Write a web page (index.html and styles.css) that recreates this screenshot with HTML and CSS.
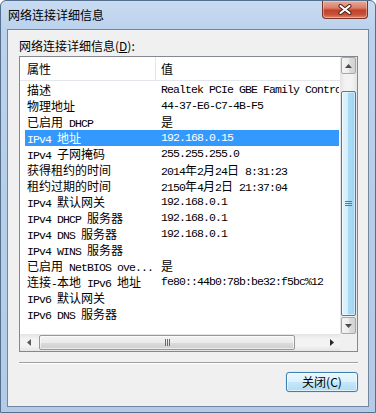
FILE: index.html
```html
<!DOCTYPE html>
<html>
<head>
<meta charset="utf-8">
<link rel="stylesheet" href="styles.css">
</head>
<body>
<div class="window">
  <div class="titlebar">
    <span class="title">网络连接详细信息</span>
    <button class="close" aria-label="关闭">
      <svg width="14" height="11" viewBox="0 0 14 11">
        <path d="M2.5 2 L11.5 9 M11.5 2 L2.5 9" stroke="#4a1a12" stroke-width="4" stroke-linecap="round"/>
        <path d="M2.5 2 L11.5 9 M11.5 2 L2.5 9" stroke="#ffffff" stroke-width="2.2" stroke-linecap="round"/>
      </svg>
    </button>
  </div>
  <div class="client">
    <div class="label">网络连接详细信息(<u>D</u>):</div>
    <div class="listbox">
      <div class="view">
        <div class="header">
          <div class="hc1">属性</div>
          <div class="hc2">值</div>
        </div>
        <div class="rows">
          <div class="row"><span class="k"><span class="c">描述</span></span><span class="v">Realtek PCIe GBE Family Controller</span></div>
          <div class="row"><span class="k"><span class="c">物理地址</span></span><span class="v">44-37-E6-C7-4B-F5</span></div>
          <div class="row"><span class="k"><span class="c">已启用</span> DHCP</span><span class="v"><span class="c">是</span></span></div>
          <div class="row sel"><span class="k">IPv4 <span class="c">地址</span></span><span class="v">192.168.0.15</span></div>
          <div class="row"><span class="k">IPv4 <span class="c">子网掩码</span></span><span class="v">255.255.255.0</span></div>
          <div class="row"><span class="k"><span class="c">获得租约的时间</span></span><span class="v">2014<span class="c">年</span>2<span class="c">月</span>24<span class="c">日</span> 8:31:23</span></div>
          <div class="row"><span class="k"><span class="c">租约过期的时间</span></span><span class="v">2150<span class="c">年</span>4<span class="c">月</span>2<span class="c">日</span> 21:37:04</span></div>
          <div class="row"><span class="k">IPv4 <span class="c">默认网关</span></span><span class="v">192.168.0.1</span></div>
          <div class="row"><span class="k">IPv4 DHCP <span class="c">服务器</span></span><span class="v">192.168.0.1</span></div>
          <div class="row"><span class="k">IPv4 DNS <span class="c">服务器</span></span><span class="v">192.168.0.1</span></div>
          <div class="row"><span class="k">IPv4 WINS <span class="c">服务器</span></span><span class="v"></span></div>
          <div class="row"><span class="k"><span class="c">已启用</span> NetBIOS ove...</span><span class="v"><span class="c">是</span></span></div>
          <div class="row"><span class="k"><span class="c">连接</span>-<span class="c">本地</span> IPv6 <span class="c">地址</span></span><span class="v">fe80::44b0:78b:be32:f5bc%12</span></div>
          <div class="row"><span class="k">IPv6 <span class="c">默认网关</span></span><span class="v"></span></div>
          <div class="row"><span class="k">IPv6 DNS <span class="c">服务器</span></span><span class="v"></span></div>
        </div>
      </div>
      <div class="vscroll">
        <div class="vbtn">
          <svg width="7" height="4" viewBox="0 0 7 4"><path d="M0 4 L3.5 0 L7 4 Z" fill="#4d4d4d"/></svg>
        </div>
        <div class="vgap-top"></div>
        <div class="vthumb">
          <svg width="7" height="7" viewBox="0 0 7 7">
            <path d="M0 1.5 H7 M0 3.5 H7 M0 5.5 H7" stroke="#3c7fb1" stroke-width="1"/>
          </svg>
        </div>
        <div class="vgap-bottom"></div>
        <div class="vbtn">
          <svg width="7" height="4" viewBox="0 0 7 4"><path d="M0 0 L7 0 L3.5 4 Z" fill="#4d4d4d"/></svg>
        </div>
      </div>
      <div class="hscroll">
        <div class="harrow">
          <svg width="4" height="7" viewBox="0 0 4 7"><path d="M4 0 L4 7 L0 3.5 Z" fill="#5a5a5a"/></svg>
        </div>
        <div class="hgap"></div>
        <div class="hthumb">
          <svg width="7" height="7" viewBox="0 0 7 7">
            <path d="M1.5 0 V7 M3.5 0 V7 M5.5 0 V7" stroke="#6a6a6a" stroke-width="1"/>
          </svg>
        </div>
        <div class="htrack"></div>
        <div class="harrow">
          <svg width="4" height="7" viewBox="0 0 4 7"><path d="M0 0 L0 7 L4 3.5 Z" fill="#2a2a2a"/></svg>
        </div>
      </div>
      <div class="corner"></div>
    </div>
    <div class="sep"></div>
    <div class="actions">
      <button class="btn">关闭(C)</button>
    </div>
  </div>
</div>
</body>
</html>
```

FILE: styles.css
```css
html, body {
  margin: 0;
  padding: 0;
}

body {
  width: 376px;
  height: 413px;
  overflow: hidden;
  background: #ffffff;
  font-family: "Noto Sans CJK SC", "Noto Sans", sans-serif;
}

.window {
  box-sizing: border-box;
  width: 376px;
  height: 413px;
  border: 1px solid #55708f;
  border-radius: 6px 6px 0 0;
  padding: 0 6px 5px 6px;
  background: linear-gradient(180deg, #c8dbf1 0px, #bcd2ec 28px, #b7cee9 200px, #b3cbe7 100%);
  display: flex;
  flex-direction: column;
}

.titlebar {
  flex: none;
  height: 28px;
  display: flex;
  align-items: flex-start;
  justify-content: space-between;
}

.title {
  margin: 6px 0 0 1px;
  font-size: 12px;
  line-height: 16px;
  color: #000000;
}

.close {
  box-sizing: border-box;
  width: 46px;
  height: 18px;
  margin: 0 1px 0 0;
  padding: 0;
  border: 1px solid #7a3326;
  border-top: none;
  border-radius: 0 0 4px 4px;
  background: linear-gradient(180deg, #e9ab9a 0%, #d97f68 40%, #c2412a 55%, #c6523a 80%, #da8a71 100%);
  box-shadow: inset 0 0 0 1px rgba(255, 220, 210, 0.45);
  display: flex;
  align-items: center;
  justify-content: center;
}

.client {
  flex: 1;
  border: 1px solid #72869f;
  background: #f0f0f0;
  padding: 8px 10px 0 11px;
  display: flex;
  flex-direction: column;
}

.label {
  font-size: 12px;
  line-height: 16px;
  color: #000;
  margin-bottom: 2px;
}

.label u {
  text-decoration: underline;
}

.listbox {
  display: grid;
  grid-template-columns: 320px 17px;
  grid-template-rows: 277px 17px;
  border: 1px solid #828790;
  background: #ffffff;
  width: 337px;
}

.view {
  grid-row: 1;
  grid-column: 1;
  overflow: hidden;
}

.header {
  display: flex;
  height: 23px;
  border-bottom: 1px solid #e3e6ea;
  font-size: 12px;
  line-height: 23px;
  color: #000;
}

.hc1 {
  width: 128px;
  padding-left: 7px;
  border-right: 1px solid #e3e6ea;
}

.hc2 {
  padding-left: 5px;
}

.rows {
  padding: 1px 1px 0 5px;
}

.row {
  display: flex;
  height: 16px;
  line-height: 16px;
  white-space: nowrap;
  overflow: hidden;
  font-family: "Liberation Mono", "Noto Sans CJK SC", monospace;
  font-size: 11.5px;
  letter-spacing: -0.9px;
  color: #000;
}

.row.sel {
  background: #3399ff;
  color: #ffffff;
}

.k {
  flex: none;
  width: 132px;
  padding-left: 2px;
  overflow: hidden;
}

.v {
  flex: none;
  padding-left: 2px;
}

.c {
  font-family: "Noto Sans CJK SC", sans-serif;
  font-size: 12px;
  letter-spacing: 0;
}

.vscroll {
  grid-row: 1;
  grid-column: 2;
  display: flex;
  flex-direction: column;
  background: linear-gradient(90deg, #e4e4e4 0%, #f3f3f3 30%, #f3f3f3 70%, #e4e4e4 100%);
}

.vbtn {
  box-sizing: border-box;
  height: 17px;
  margin: 0 1px;
  border: 1px solid #a7a7a7;
  border-radius: 2px;
  background: linear-gradient(90deg, #f4f4f4 0%, #ececec 50%, #dedede 51%, #d2d2d2 100%);
  display: flex;
  align-items: center;
  justify-content: center;
}

.vgap-top {
  height: 17px;
}

.vthumb {
  box-sizing: border-box;
  height: 225px;
  margin: 0 1px;
  border: 1px solid #3c7fb1;
  border-radius: 2px;
  background: linear-gradient(90deg, #e3f4fc 0%, #d4edfb 45%, #aadbf6 50%, #a2d3f2 100%);
  box-shadow: inset 0 0 0 1px rgba(255, 255, 255, 0.5);
  display: flex;
  align-items: center;
  justify-content: center;
}

.vgap-bottom {
  height: 1px;
}

.hscroll {
  grid-row: 2;
  grid-column: 1;
  display: flex;
  align-items: center;
  background: linear-gradient(180deg, #e4e4e4 0%, #f3f3f3 30%, #f3f3f3 70%, #e4e4e4 100%);
}

.harrow {
  flex: none;
  width: 17px;
  height: 17px;
  display: flex;
  align-items: center;
  justify-content: center;
}

.hgap {
  flex: none;
  width: 2px;
}

.hthumb {
  box-sizing: border-box;
  flex: none;
  width: 256px;
  height: 15px;
  border: 1px solid #979797;
  border-radius: 2px;
  background: linear-gradient(180deg, #f3f3f3 0%, #ebebeb 50%, #dcdcdc 51%, #cfcfcf 100%);
  box-shadow: inset 0 0 0 1px rgba(255, 255, 255, 0.6);
  display: flex;
  align-items: center;
  justify-content: center;
}

.htrack {
  flex: 1;
}

.corner {
  grid-row: 2;
  grid-column: 2;
  background: #f0f0f0;
}

.sep {
  height: 0;
  margin-top: 10px;
  border-top: 1px solid #a0a0a0;
  border-bottom: 1px solid #ffffff;
}

.actions {
  display: flex;
  justify-content: flex-end;
  margin-top: 8px;
}

.btn {
  box-sizing: border-box;
  width: 72px;
  height: 20px;
  padding: 0;
  border: 1px solid #3c7fb1;
  border-radius: 3px;
  background: linear-gradient(180deg, #eaf6fd 0%, #dcf1fc 50%, #c5e7f9 51%, #b2dcf3 100%);
  box-shadow: inset 0 0 0 1px rgba(255, 255, 255, 0.6), 0 0 1px #7ec4ee;
  font-family: "Noto Sans CJK SC", sans-serif;
  font-size: 12px;
  line-height: 16px;
  color: #000;
}
```
